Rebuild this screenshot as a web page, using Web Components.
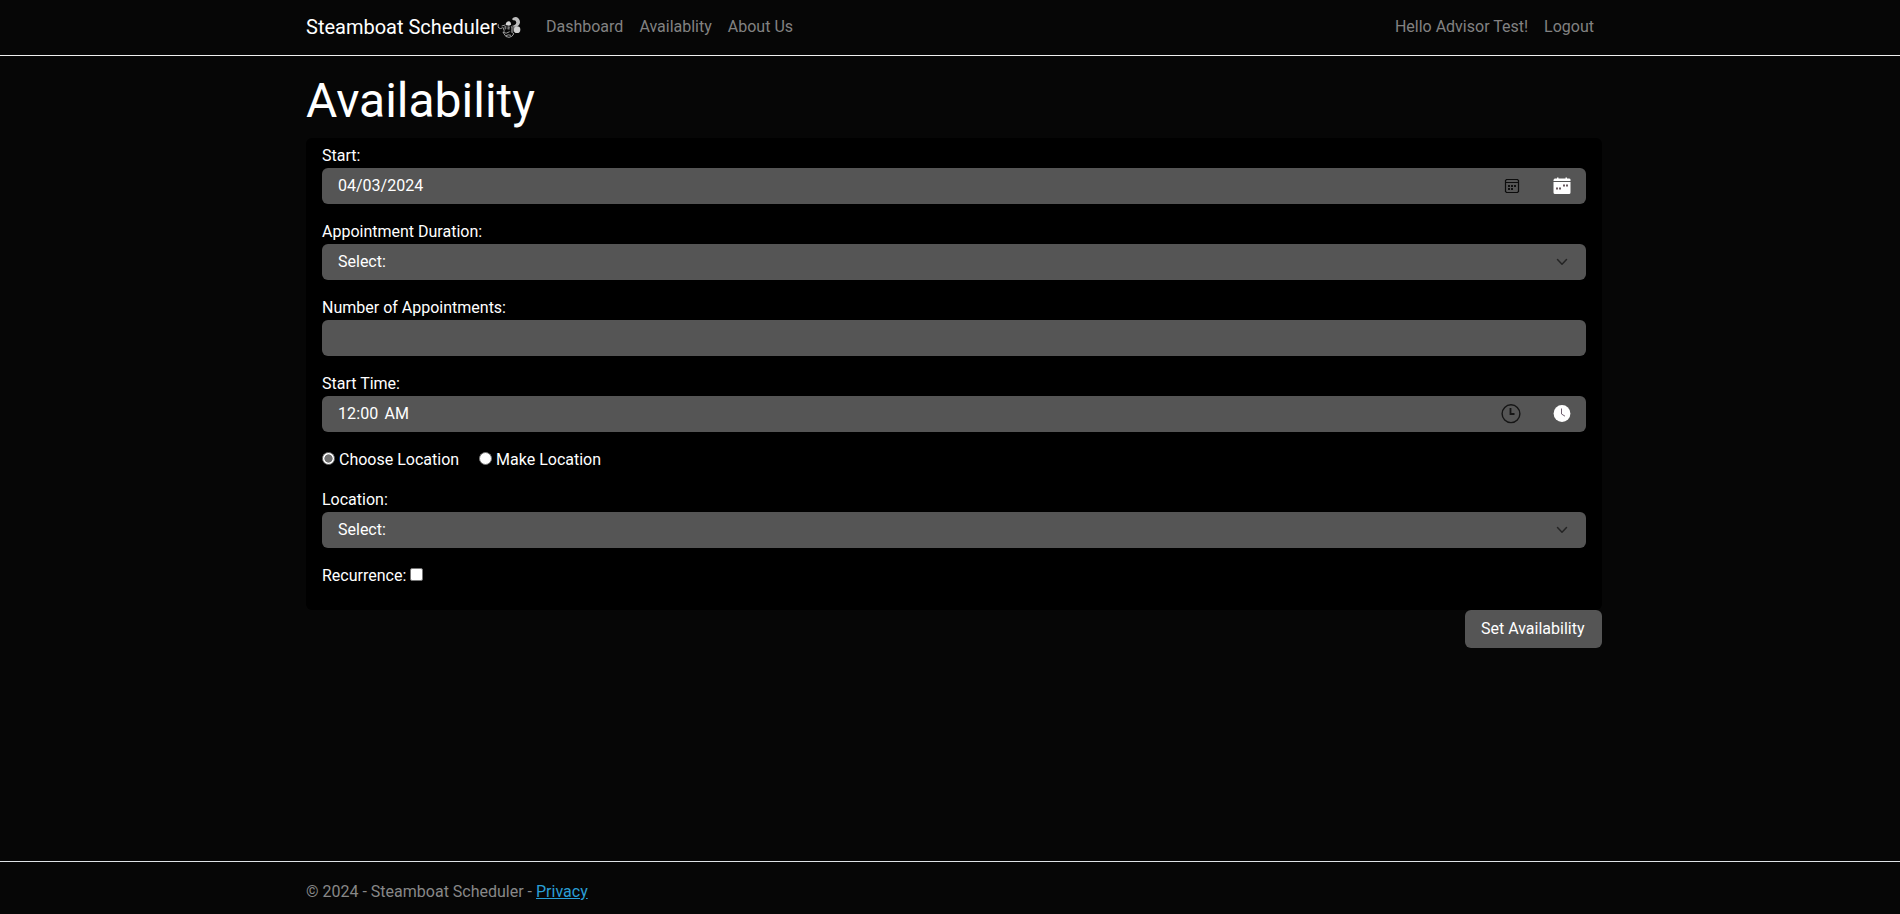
<!DOCTYPE html>
<html lang="en">
<head>
<meta charset="utf-8">
<title>Availability - Steamboat Scheduler</title>
<style>
html,body{margin:0;height:100%;overflow:hidden;background:#060606;color:#fff;font:400 16px/24px Roboto,"Liberation Sans",sans-serif}
</style>
</head>
<body>
<scheduler-app></scheduler-app>
<script>
function define(name, html) {
  customElements.define(name, class extends HTMLElement {
    constructor() {
      super();
      const t = document.createElement('template');
      t.innerHTML = html;
      this.attachShadow({mode: 'open'}).append(t.content.cloneNode(true));
    }
  });
}

define('brand-logo', `
<style>:host{display:block;width:24px;height:24px}svg{display:block}</style>
<svg width="24" height="24" viewBox="6 6 72 72">
  <path d="M51 15Q57 7 66 10Q75 15 75 26Q73 36 65 38Q56 40 51 35Q62 34 64 26Q63 17 54 19Z" fill="#bdbdbd"/>
  <circle cx="66" cy="47" r="10" fill="#d0d0d0"/>
  <path d="M33 27Q36 21 43 22Q49 26 48 32L42 35L32 33Z" fill="#d6d6d6"/>
  <path d="M10 31Q8 36 11 42M12 42Q17 46 23 41M20 36L31 33M24 40Q30 51 26 58Q32 71 42 70Q52 69 56 60M23 55Q34 61 44 53M49 37Q54 45 49 53L57 60M32 66Q39 60 48 64" fill="none" stroke="#9c9c9c" stroke-width="3"/>
  <path d="M28 37L34 35L34 45L29 47ZM38 36L45 38L43 47L37 46Z" fill="#777"/>
  <path d="M50 36L58 40L55 55L48 56Z" fill="#626262"/>
</svg>`);

define('nav-link', `
<style>:host{display:block;padding:0 8px;color:#828282}</style><slot></slot>`);

define('site-header', `
<style>
:host{display:block;height:55px;border-bottom:1px solid #eee;flex:none}
nav{display:flex;align-items:flex-start;width:1296px;margin-left:306px;padding-top:14px}
.brand{display:flex;font-size:20px;line-height:26px;margin-right:17px}
brand-logo{margin-top:2px}
.links{display:flex;padding-top:1px}.right{margin-left:auto}
</style>
<nav>
  <div class="brand"><span>Steamboat Scheduler</span><brand-logo></brand-logo></div>
  <div class="links"><nav-link>Dashboard</nav-link><nav-link>Availablity</nav-link><nav-link>About Us</nav-link></div>
  <div class="links right"><nav-link>Hello Advisor Test!</nav-link><nav-link>Logout</nav-link></div>
</nav>`);

define('form-field', `
<style>
:host{display:block;margin-bottom:16px}
.box{display:flex;align-items:center;height:36px;box-sizing:border-box;padding:0 13px 0 16px;border-radius:6px;background:#555}
.icons{display:flex;align-items:center;margin-left:auto}
</style>
<div><slot name="label"></slot></div>
<div class="box"><slot></slot><div class="icons"><slot name="icons"></slot></div></div>`);

define('choice-mark', `
<style>
:host{display:block;box-sizing:border-box;width:13px;height:13px;border:1px solid #767676;background:#fff;border-radius:2px}
:host([round]){border-radius:50%}
:host([checked]){background:radial-gradient(circle,#6f6f6f 0 3.8px,#fff 4.4px)}
</style>`);

define('icon-calendar', `
<style>:host{display:block;margin-right:33px}svg{display:block}</style>
<svg width="16" height="16" viewBox="0 0 16 16"><path d="M2.5 1.5h11l1 1v11l-1 1h-11l-1-1v-11zM1.5 4.5h13" fill="none" stroke="#0c0c0c" stroke-width="1.200"/><path d="M7 7h2v2H7zM10 7h2v2h-2zM4 7h2v2H4zM4 10h2v2H4zM7 10h2v2H7z" fill="#111"/></svg>`);

define('icon-calendar-solid', `
<style>:host{display:block;margin-right:2px}svg{display:block}</style>
<svg width="18" height="18" viewBox="0 0 18 18"><path d="M1 2.5Q1 1.5 2 1.5H4V.5H5.5V1.5H12.5V.5H14V1.5H16Q17.500 1.500 17.500 2.500V4H.5V2.500zM.5 5H17.500V15.500Q17.500 17 16 17H2Q.5 17 .5 15.500z" fill="#fff"/><path d="M10 7.500h2v2h-2zM13 7.500h2v2h-2zM3 10.500h2v2H3zM6 10.500h2v2H6z" fill="#68585e"/></svg>`);

define('icon-clock', `
<style>:host{display:block;margin-right:32px}svg{display:block}</style>
<svg width="20" height="20" viewBox="0 0 20 20" fill="none" stroke="#151515"><circle cx="10" cy="9.700" r="8.900" stroke-width="1.400"/><path d="M9.500 4V10H13.500" stroke-width="1.800"/></svg>`);

define('icon-clock-solid', `
<style>:host{display:block;margin-right:2px}svg{display:block}</style>
<svg width="18" height="18" viewBox="0 0 18 18"><circle cx="9" cy="8.500" r="8.400" fill="#fff"/><path d="M8.500 3.500V9L12 11.200" fill="none" stroke="#706070"/></svg>`);

define('icon-chevron', `
<style>:host{display:block;margin-right:3px}svg{display:block}</style>
<svg width="14" height="14" viewBox="0 0 14 14"><path d="M1.500 4.500L6 9.200L10.500 4.500" fill="none" stroke="#242424" stroke-width="1.500" stroke-linecap="round" stroke-linejoin="round"/></svg>`);

define('availability-form', `
<style>
:host{display:block;height:472px;box-sizing:border-box;padding:6px 16px 0;border-radius:6px;background:#000}
.row{display:flex;height:24px}
.choices{margin-bottom:16px}
.choices choice-mark{margin:4px 4px 0 0}
.choices span{margin-right:20px}
.recur choice-mark{margin:4px 0 0 4px}
.time{word-spacing:2px;letter-spacing:.1px}
</style>
<form-field><span slot="label">Start:</span>04/03/2024<icon-calendar slot="icons"></icon-calendar><icon-calendar-solid slot="icons"></icon-calendar-solid></form-field>
<form-field><span slot="label">Appointment Duration:</span>Select:<icon-chevron slot="icons"></icon-chevron></form-field>
<form-field><span slot="label">Number of Appointments:</span></form-field>
<form-field><span slot="label">Start Time:</span><span class="time">12:00 AM</span><icon-clock slot="icons"></icon-clock><icon-clock-solid slot="icons"></icon-clock-solid></form-field>
<div class="row choices"><choice-mark round checked></choice-mark><span>Choose Location</span><choice-mark round></choice-mark><span>Make Location</span></div>
<form-field><span slot="label">Location:</span>Select:<icon-chevron slot="icons"></icon-chevron></form-field>
<div class="row recur"><span>Recurrence:</span><choice-mark></choice-mark></div>`);

define('action-button', `
<style>:host{display:block;box-sizing:border-box;width:137px;height:38px;line-height:37px;padding:0 16px;border-radius:6px;background:#555;white-space:nowrap}</style><slot></slot>`);

define('site-footer', `
<style>
:host{display:block;flex:none;height:52px;line-height:60px;overflow:hidden;border-top:1px solid #dee2e6;color:#888}
div{margin-left:306px}
span{color:#2a9fd6;text-decoration:underline}
</style>
<div>© 2024 - Steamboat Scheduler - <span>Privacy</span></div>`);

define('scheduler-app', `
<style>
:host{display:flex;flex-direction:column;height:914px}
main{flex:1;width:1296px;margin-left:306px}
h1{margin:16px 0 8px;font-size:48px;line-height:58px;font-weight:400}
.actions{display:flex;justify-content:flex-end}
</style>
<site-header></site-header>
<main>
  <h1>Availability</h1>
  <availability-form></availability-form>
  <div class="actions"><action-button>Set Availability</action-button></div>
</main>
<site-footer></site-footer>`);
</script>
</body>
</html>
